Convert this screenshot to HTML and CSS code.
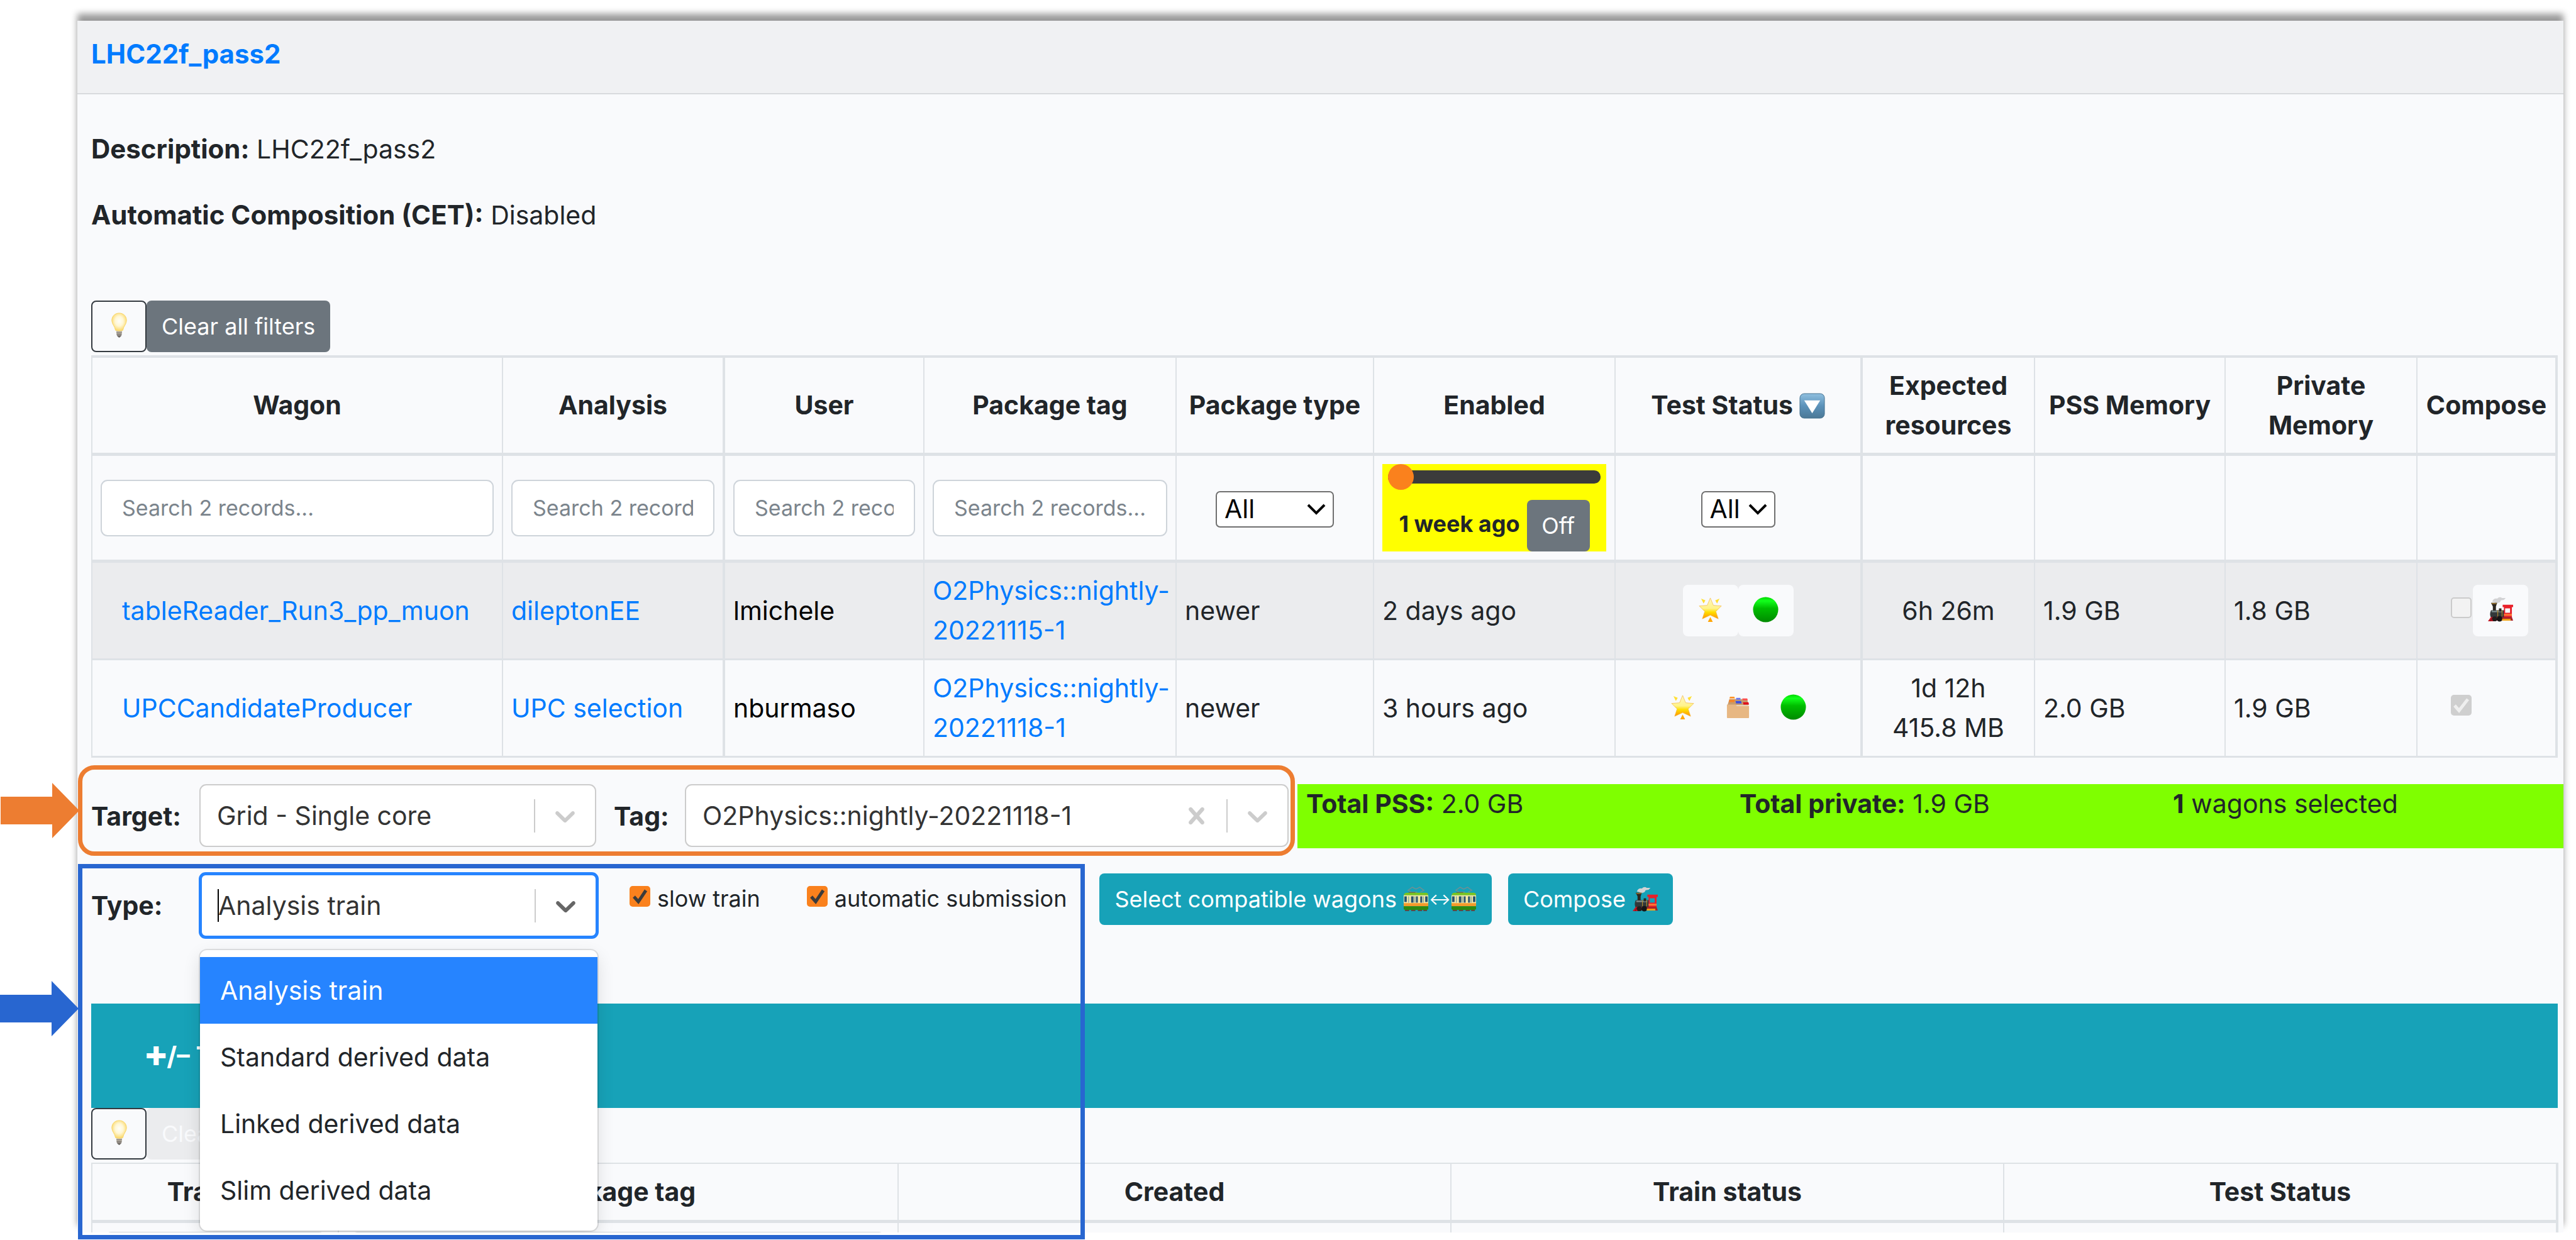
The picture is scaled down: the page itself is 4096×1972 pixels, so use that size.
FILE: index.html
```html
<!DOCTYPE html>
<html lang="en">
<head>
<meta charset="utf-8">
<title>LHC22f_pass2</title>
<link rel="stylesheet" href="styles.css">
</head>
<body>
<svg class="sprite" aria-hidden="true">
  <defs>
    <linearGradient id="g-star" x1="0" y1="0" x2="0" y2="1"><stop offset="0" stop-color="#fff6c0"/><stop offset=".5" stop-color="#fff38a"/><stop offset=".68" stop-color="#ffdf00"/><stop offset="1" stop-color="#ff8f00"/></linearGradient>
    <linearGradient id="g-ray" x1="0" y1="0" x2="0" y2="1"><stop offset="0" stop-color="#ffe53a"/><stop offset="1" stop-color="#ffa200"/></linearGradient>
    <linearGradient id="g-green" x1="0" y1="0" x2="0" y2="1"><stop offset="0" stop-color="#00d800"/><stop offset=".15" stop-color="#12ff1c"/><stop offset=".45" stop-color="#00bd00"/><stop offset="1" stop-color="#008a00"/></linearGradient>
    <radialGradient id="g-bulb" cx=".5" cy=".45" r=".55"><stop offset="0" stop-color="#fffef8"/><stop offset=".5" stop-color="#fff7d4"/><stop offset="1" stop-color="#fbd867"/></radialGradient>
    <linearGradient id="g-sort" x1="0" y1="0" x2="0" y2="1"><stop offset="0" stop-color="#8fbfdf"/><stop offset=".5" stop-color="#5b92ba"/><stop offset="1" stop-color="#4c7896"/></linearGradient>
    <linearGradient id="g-cap" x1="0" y1="0" x2="0" y2="1"><stop offset="0" stop-color="#e4dccb"/><stop offset=".6" stop-color="#9b948c"/><stop offset="1" stop-color="#4c4946"/></linearGradient>
  </defs>
  <symbol id="bulb" viewBox="0 0 42 42">
    <path d="M16 29h10l-1 8q-1 3-4 4-3-1-4-4z" fill="url(#g-cap)"/>
    <path d="M16.500 32h9M17 35h8" stroke="#77726d" stroke-width="1"/>
    <path d="M21 1C14 1 9 6 9 13c0 6 5 9 6 16q6 2 12 0c1-7 6-10 6-16C33 6 28 1 21 1z" fill="url(#g-bulb)" stroke="#f8d56a" stroke-width="1"/>
  </symbol>
  <symbol id="star" viewBox="0 0 42 42">
    <path d="M21 2l5 12 13 1-9 9 4 12-13-6-13 6 4-12L3 15l13-1z" fill="url(#g-star)" stroke="#f3b63c" stroke-width=".7"/>
    <path d="M6 3l7 3-3 5zM36 3l-7 3 3 5zM21 33l4 8h-8z" fill="url(#g-ray)"/>
  </symbol>
  <symbol id="green" viewBox="0 0 42 42"><circle cx="21" cy="21" r="20.500" fill="url(#g-green)"/></symbol>
  <symbol id="box" viewBox="0 0 42 42">
    <path d="M4 18l3-10h29l2 10z" fill="#c79b6c"/>
    <path d="M8 4h7l1 3H7z" fill="#ff9326"/><path d="M7 9h9l-1 4H6z" fill="#f5852a"/>
    <path d="M18 6h7v3h-7z" fill="#6b78f0"/><path d="M17 11h9l1 4h-9z" fill="#3c4fe0"/>
    <path d="M28 7h8l1 3h-8z" fill="#ff4e4e"/><path d="M29 13h9l1 4h-9z" fill="#e0101c"/>
    <path d="M3 17h14l2 2h20v19q0 1-1 1H4q-1 0-1-1z" fill="#e7b783"/>
  </symbol>
  <symbol id="loco" viewBox="0 0 42 42">
    <path d="M8 8q2-6 8-5 4-4 8-1l6 0-3 3-5 1q-1 4-5 4-2 3-5-1z" fill="#d3d3d5"/>
    <path d="M6 10h10l-2 6v8H9v-8z" fill="#2b2620"/><path d="M7 11h8" stroke="#8d6b2c" stroke-width="2"/>
    <path d="M6 22h22v12H6q-3-5 0-12z" fill="#33383a"/>
    <path d="M7 24h18" stroke="#7c8c8c" stroke-width="2.500"/>
    <path d="M19 19h4v5h-4z" fill="#2b2620"/>
    <path d="M17 22v10M24 22v10" stroke="#b28a2e" stroke-width="1.200"/>
    <path fill-rule="evenodd" d="M25 13h17v4h-2v19H27V17h-2zM29 19v7h8v-7z" fill="#e8202a"/>
    <path d="M27 28h13v3H27z" fill="#ff7b35"/>
    <path d="M1 40l5-7h6l1 7z" fill="#c01724"/><path d="M5 40l4-7" stroke="#6e0d15" stroke-width="1"/>
    <path d="M12 33h28l2 6H12z" fill="#a8232a"/>
    <circle cx="12" cy="36" r="4" fill="#221e1e"/><circle cx="20" cy="36" r="4.500" fill="#151515"/>
    <path d="M24 36h14v3H24z" fill="#f2a516"/>
  </symbol>
  <symbol id="tram" viewBox="0 0 42 42">
    <path d="M14 9L8 6l7-5 6 3 6-3 7 5-6 3M11 9h12" fill="none" stroke="#6b9195" stroke-width="1.500"/>
    <path d="M9 9h11v2H9z" fill="#555a4e"/>
    <path d="M1 14q1-4 5-4h31q4 0 4 4z" fill="#7bc51e"/>
    <path d="M1 14h40v16H1z" fill="#f7eaa6"/>
    <path d="M2 16h4v9H2zM13 16h4v10h-4zM21 16h3v10h-3zM28 16h3v10h-3zM36 16h4v9h-4z" fill="#28536f"/>
    <path d="M18 16h2v10h-2zM32 16h2v10h-2zM8 16h2v10H8z" fill="#8fb0a8"/>
    <path d="M1 27h40v5H1z" fill="#f59a2b"/><path d="M1 32h40v4q-1 2-3 2H4q-2 0-3-2z" fill="#2d8a10"/>
    <path d="M3 38h7v2H3zM13 38h7v2h-7zM24 38h7v2h-7zM33 38h6v2h-6z" fill="#5e4a44"/>
  </symbol>
  <symbol id="sort" viewBox="0 0 42 42">
    <rect x="1" y="1" width="40" height="40" rx="7" fill="url(#g-sort)" stroke="#45718f" stroke-width="1"/>
    <path d="M8 12h26L21 33z" fill="#fff"/>
  </symbol>
  <symbol id="chevron" viewBox="0 0 20 20"><path d="M4.516 7.548c.436-.446 1.043-.481 1.576 0L10 11.295l3.908-3.747c.533-.481 1.141-.446 1.574 0 .436.445.408 1.197 0 1.615-.406.418-4.695 4.502-4.695 4.502-.217.223-.502.335-.787.335s-.57-.112-.789-.335c0 0-4.287-4.084-4.695-4.502s-.436-1.170 0-1.615z"/></symbol>
  <symbol id="cross" viewBox="0 0 20 20"><path d="M14.348 14.849c-.469.469-1.229.469-1.697 0L10 11.819l-2.651 3.029c-.469.469-1.229.469-1.697 0-.469-.469-.469-1.229 0-1.697l2.758-3.150-2.759-3.152c-.469-.469-.469-1.228 0-1.697s1.228-.469 1.697 0L10 8.183l2.651-3.031c.469-.469 1.228-.469 1.697 0s.469 1.229 0 1.697l-2.758 3.152 2.758 3.150c.469.469.469 1.229 0 1.698z"/></symbol>
</svg>

<main class="panel">
  <header class="panel-head"><a href="#">LHC22f_pass2</a></header>
  <div class="panel-body">
    <section class="summary">
      <p><b>Description:</b> LHC22f_pass2</p>
      <p><b>Automatic Composition (CET):</b> Disabled</p>
    </section>

    <div class="toolbar">
      <button class="btn btn-icon btn-outline" aria-label="Hint"><svg class="emoji"><use href="#bulb"/></svg></button><button class="btn btn-secondary">Clear all filters</button>
    </div>

    <table class="grid wagons">
      <colgroup><col class="w1"><col class="w2"><col class="w3"><col class="w4"><col class="w5"><col class="w6"><col class="w7"><col class="w8"><col class="w9"><col class="w10"><col class="w11"></colgroup>
      <thead>
        <tr class="heads">
          <th>Wagon</th><th>Analysis</th><th class="thick">User</th><th>Package tag</th><th>Package type</th><th>Enabled</th>
          <th>Test Status <svg class="emoji sort"><use href="#sort"/></svg></th>
          <th class="thick">Expected resources</th><th>PSS Memory</th><th>Private Memory</th><th>Compose</th>
        </tr>
        <tr class="filters">
          <td><input class="search" type="text" aria-label="Filter wagon" placeholder="Search 2 records..."></td>
          <td><input class="search" type="text" aria-label="Filter analysis" placeholder="Search 2 records..."></td>
          <td class="thick"><input class="search" type="text" aria-label="Filter user" placeholder="Search 2 records..."></td>
          <td><input class="search" type="text" aria-label="Filter package tag" placeholder="Search 2 records..."></td>
          <td class="center"><select class="mini mini-wide" aria-label="Filter package type"><option>All</option></select></td>
          <td>
            <div class="age">
              <input type="range" min="0" max="100" value="0" aria-label="Enabled since">
              <div class="age-row"><b>1 week ago</b><button class="btn btn-secondary btn-off">Off</button></div>
            </div>
          </td>
          <td class="center"><select class="mini" aria-label="Filter test status"><option>All</option></select></td>
          <td class="thick"></td><td></td><td></td><td></td>
        </tr>
      </thead>
      <tbody>
        <tr class="odd">
          <td class="name"><a href="#">tableReader_Run3_pp_muon</a></td>
          <td><a href="#">dileptonEE</a></td>
          <td class="thick user">lmichele</td>
          <td><a href="#">O2Physics::nightly-20221115-1</a></td>
          <td>newer</td><td>2 days ago</td>
          <td><div class="icons"><button class="btn btn-icon btn-light" aria-label="New"><svg class="emoji"><use href="#star"/></svg></button><button class="btn btn-icon btn-light" aria-label="Test passed"><svg class="emoji"><use href="#green"/></svg></button></div></td>
          <td class="thick center">6h 26m</td><td>1.9 GB</td><td>1.8 GB</td>
          <td class="compose"><div class="icons"><input class="tick" type="checkbox" disabled aria-label="Compose tableReader_Run3_pp_muon"><button class="btn btn-icon btn-light" aria-label="Train"><svg class="emoji"><use href="#loco"/></svg></button></div></td>
        </tr>
        <tr>
          <td class="name"><a href="#">UPCCandidateProducer</a></td>
          <td><a href="#">UPC selection</a></td>
          <td class="thick user">nburmaso</td>
          <td><a href="#">O2Physics::nightly-20221118-1</a></td>
          <td>newer</td><td>3 hours ago</td>
          <td><div class="icons"><button class="btn btn-icon btn-light" aria-label="New"><svg class="emoji"><use href="#star"/></svg></button><button class="btn btn-icon btn-light" aria-label="Derived data"><svg class="emoji"><use href="#box"/></svg></button><button class="btn btn-icon btn-light" aria-label="Test passed"><svg class="emoji"><use href="#green"/></svg></button></div></td>
          <td class="thick center">1d 12h<br>415.8 MB</td><td>2.0 GB</td><td>1.9 GB</td>
          <td class="compose"><div class="icons"><input class="tick" type="checkbox" checked disabled aria-label="Compose UPCCandidateProducer"><span class="btn btn-icon"></span></div></td>
        </tr>
      </tbody>
    </table>

    <div class="row target-row">
      <label class="lead" for="target">Target:</label>
      <div class="picker">
        <select id="target"><option>Grid - Single core</option></select>
        <span class="marks"><i></i><svg><use href="#chevron"/></svg></span>
      </div>
      <label class="lead lead-tag" for="tag">Tag:</label>
      <div class="picker picker-tag">
        <select id="tag"><option>O2Physics::nightly-20221118-1</option></select>
        <span class="marks"><svg><use href="#cross"/></svg><i></i><svg><use href="#chevron"/></svg></span>
      </div>
      <div class="totals">
        <span><b>Total PSS:</b> 2.0 GB</span><span><b>Total private:</b> 1.9 GB</span><span><b>1</b> wagons selected</span>
      </div>
    </div>

    <div class="row type-row">
      <label class="lead" for="type">Type:</label>
      <div class="picker picker-open">
        <input id="type" type="text" role="combobox" aria-expanded="true" aria-controls="type-menu" value="Analysis train">
        <span class="caret"></span>
        <span class="marks"><i></i><svg><use href="#chevron"/></svg></span>
        <ul class="menu" id="type-menu" role="listbox">
          <li role="option" aria-selected="true">Analysis train</li>
          <li role="option">Standard derived data</li>
          <li role="option">Linked derived data</li>
          <li role="option">Slim derived data</li>
        </ul>
      </div>
      <div class="checks">
        <label><input class="tick" type="checkbox" checked> slow train</label>
        <label><input class="tick" type="checkbox" checked> automatic submission</label>
      </div>
      <div class="actions">
        <button class="btn btn-info">Select compatible wagons <svg class="emoji"><use href="#tram"/></svg><span class="swap">↔</span><svg class="emoji"><use href="#tram"/></svg></button>
        <button class="btn btn-info">Compose <svg class="emoji"><use href="#loco"/></svg></button>
      </div>
    </div>

    <h2 class="bar"><span class="plus">✚</span>/– Trains</h2>

    <div class="toolbar">
      <button class="btn btn-icon btn-outline" aria-label="Hint"><svg class="emoji"><use href="#bulb"/></svg></button><button class="btn btn-disabled" disabled>Clear all filters</button>
    </div>

    <table class="grid trains">
      <colgroup><col class="t1"><col class="t2"><col class="t3"><col class="t3"><col class="t3"></colgroup>
      <thead>
        <tr class="heads"><th>Train ID</th><th>Package tag</th><th>Created</th><th>Train status</th><th>Test Status</th></tr>
        <tr class="filters">
          <td><input class="search" type="text" aria-label="Filter train"></td>
          <td><input class="search" type="text" aria-label="Filter train package tag"></td>
          <td></td><td></td><td></td>
        </tr>
      </thead>
    </table>
  </div>
</main>

<div class="callout callout-target"></div>
<div class="callout callout-type"></div>
<svg class="arrow arrow-target" viewBox="0 0 126 88"><path d="M1 22h82V0l43 44-43 44V66H1z"/></svg>
<svg class="arrow arrow-type" viewBox="0 0 126 88"><path d="M0 22h82V0l43 44-43 44V66H0z"/></svg>
</body>
</html>
```
FILE: styles.css
```css
:root {
  --text: #212529;
  --link: #007bff;
  --surface: #f9fafc;
  --line: #dee2e6;
  --info: #17a2b8;
  --secondary: #6c757d;
  --orange: #ed7d31;
  --blue: #2866d0;
  --fs: 41px;
  --fs-title: 42px;
  --fs-small: 36px;
}
* { box-sizing: border-box; }
body {
  margin: 0;
  height: 100vh;
  position: relative;
  display: flex;
  flex-direction: column;
  overflow: hidden;
  background: #fff;
  color: var(--text);
  font: 400 var(--fs)/63px Inter, "Liberation Sans", sans-serif;
}
a { color: var(--link); text-decoration: none; }
b, th { font-weight: 700; }
p, h2, ul { margin: 0; padding: 0; }
button, input, select { font: inherit; color: inherit; margin: 0; }
.sprite { position: absolute; width: 0; height: 0; }

.panel {
  flex: 1;
  min-height: 0;
  margin: 33px 20px 12px 123px;
  overflow: hidden;
  background: var(--surface);
  box-shadow: 0 -11px 10px rgba(0, 0, 0, .4);
}
.panel-head {
  padding: 21px 22px 31px;
  background: #f0f1f3;
  border-bottom: 2px solid #d8dadd;
  font-size: var(--fs-title);
  font-weight: 700;
}
.panel-body { padding: 56px 9px 0 22px; }
.summary { display: grid; gap: 42px; margin-bottom: 104px; }
.summary b { font-size: var(--fs-title); line-height: 1; }

.toolbar { display: flex; margin-bottom: 5px; }
.btn {
  display: inline-flex;
  align-items: center;
  justify-content: center;
  height: 82px;
  padding: 0 24px;
  border: 0;
  border-radius: 8px;
  font-size: var(--fs-small);
  line-height: 54px;
  white-space: pre;
}
.btn-icon { width: 88px; padding: 0 0 4px; }
.btn-outline { background: var(--surface); border: 2px solid #343a40; }
.btn-secondary { background: var(--secondary); color: #fff; }
.btn-disabled { background: #ebecee; color: var(--surface); }
.btn-light { background: var(--surface); }
.btn-info { background: var(--info); color: #fff; }
.emoji { width: 41px; height: 41px; flex: none; }
.emoji.sort { vertical-align: -7px; }
.swap { font-size: 26px; }

.grid {
  width: 100%;
  table-layout: fixed;
  border-collapse: separate;
  border-spacing: 0;
  border-right: 4px solid var(--line);
}
.grid th, .grid td {
  padding: 0 13px;
  border-left: 2px solid var(--line);
  border-bottom: 3px solid var(--line);
  vertical-align: middle;
}
.grid .heads th, .grid .filters td { border-bottom-width: 5px; }
.grid .thick { border-left-width: 4px; }
.grid .heads th { padding: 0 4px; }
.grid .center { text-align: center; }
.grid .compose { padding-right: 4px; }
.wagons { border-top: 4px solid var(--line); }
.wagons .heads { height: 156px; }
.wagons .filters { height: 170px; }
.wagons tbody tr { height: 155px; }
.wagons .odd { background: #ebecee; }
.wagons .name { padding-left: 47px; }
.wagons .user { color: #000; }
.w1 { width: 653px; } .w2 { width: 351px; } .w3 { width: 319px; } .w4 { width: 401px; }
.w5 { width: 314px; } .w6 { width: 384px; } .w7 { width: 391px; } .w8 { width: 276px; }
.w9 { width: 303px; } .w10 { width: 305px; } .w11 { width: 221px; }
.trains { border-top: 2px solid var(--line); }
.trains .heads { height: 94px; }
.trains .filters td { padding: 14px 19px; }
.t1 { width: 392px; } .t2 { width: 890px; } .t3 { width: 879px; }

.search {
  display: block;
  width: 100%;
  height: 90px;
  padding: 0 32px;
  border: 2px solid #ced4da;
  border-radius: 11px;
  background: #fff;
  font-size: 34px;
}
.search::placeholder { color: #7b848c; opacity: 1; }
.mini {
  appearance: none;
  width: 118px;
  height: 58px;
  padding: 0 12px 2px;
  border: 2px solid #6f6f6f;
  border-radius: 7px;
  background: #fff url("data:image/svg+xml,%3Csvg xmlns='http://www.w3.org/2000/svg' width='32' height='20'%3E%3Cpath d='M3 3l13 13L29 3' fill='none' stroke='%23000' stroke-width='4'/%3E%3C/svg%3E") no-repeat right 10px center;
  color: #000;
  line-height: 52px;
  vertical-align: middle;
}
.mini-wide { width: 188px; }

.age { height: 139px; background: #ff0; display: flex; flex-direction: column; justify-content: space-between; }
.age input {
  appearance: none;
  display: block;
  height: 41px;
  margin: 0 9px;
  background: none;
}
.age input::-webkit-slider-runnable-track { height: 21px; border-radius: 10px; background: #3b3b3b; }
.age input::-webkit-slider-thumb { appearance: none; width: 41px; height: 41px; margin-top: -10px; border-radius: 50%; background: #fa811d; }
.age-row { display: flex; justify-content: center; gap: 11px; font-size: var(--fs-small); line-height: 76px; white-space: nowrap; }
.btn-off { width: 100px; }

.icons { display: flex; align-items: center; justify-content: center; }
.tick {
  appearance: none;
  flex: none;
  width: 33px;
  height: 33px;
  border-radius: 5px;
  background: #fa811d url("data:image/svg+xml,%3Csvg xmlns='http://www.w3.org/2000/svg' viewBox='0 0 33 33'%3E%3Cpath d='M7 17l7 8L26 7' fill='none' stroke='%233b3b3b' stroke-width='5'/%3E%3C/svg%3E");
}
.icons .tick { margin: 0 2px 10px 0; }
.tick:disabled { border: 2px solid #cbcbcb; background: #f2f2f2; }
.tick:disabled:checked { border: 0; background: #cfcfcf url("data:image/svg+xml,%3Csvg xmlns='http://www.w3.org/2000/svg' viewBox='0 0 33 33'%3E%3Cpath d='M6 17l7 8L27 7' fill='none' stroke='%23efefef' stroke-width='5'/%3E%3C/svg%3E"); }

.row { display: flex; }
.target-row { margin: 42px -9px 38px 0; }
.lead { flex: 0 0 172px; font-weight: 700; line-height: 102px; }
.lead-tag { flex-basis: 141px; padding-left: 28px; }
.picker { position: relative; flex: 0 0 631px; height: 100px; }
.picker-tag { flex-basis: 960px; }
.picker select, .picker input {
  appearance: none;
  display: block;
  width: 100%;
  height: 100%;
  padding: 0 26px;
  border: 2px solid #ccc;
  border-radius: 11px;
  background: #fff;
  color: #333;
}
.marks { position: absolute; inset: 0 2px 0 auto; display: flex; align-items: center; pointer-events: none; }
.marks svg { width: 53px; height: 53px; margin: 0 21px; fill: #ccc; }
.marks i { width: 2px; height: 53px; background: #ccc; }
.totals {
  flex: 1;
  display: grid;
  grid-template-columns: 1fr 1fr 1fr;
  column-gap: 68px;
  margin-left: 14px;
  padding-left: 14px;
  background: #7fff00;
  white-space: nowrap;
}

.type-row { margin-bottom: 103px; }
.type-row .lead { line-height: 106px; flex-basis: 171px; }
.picker-open { height: 106px; flex-basis: 636px; }
.picker-open input { border: 5px solid #2684ff; outline: 0; }
.picker-open .marks { right: 5px; }
.picker-open .marks svg { fill: #666; }
.caret { position: absolute; left: 30px; top: 27px; width: 2px; height: 52px; background: #000; }
.menu {
  position: absolute;
  z-index: 2;
  top: calc(100% + 18px);
  left: 2px;
  right: 2px;
  padding: 11px 0;
  background: #fff;
  border-radius: 11px;
  box-shadow: 0 0 0 2px rgba(0, 0, 0, .1), 0 10px 28px rgba(0, 0, 0, .12);
  list-style: none;
}
.menu li { padding: 21px 32px; line-height: 64px; }
.menu [aria-selected] { background: #2684ff; color: #fff; }
.checks { display: flex; gap: 74px; margin-left: 49px; font-size: var(--fs-small); white-space: nowrap; }
.checks label { display: flex; align-items: center; gap: 11px; height: 84px; }
.checks .tick { margin-bottom: 8px; }
.actions { display: flex; gap: 26px; margin-left: 52px; padding-top: 2px; }

.bar { padding: 0 86px; height: 166px; background: var(--info); color: #fff; font-size: var(--fs); font-weight: 700; line-height: 166px; }
.plus { font-family: "DejaVu Sans", sans-serif; }

.callout { position: absolute; z-index: 3; left: 124px; pointer-events: none; }
.callout-target { top: 1217px; width: 1935px; height: 144px; border: 7px solid var(--orange); border-radius: 26px; }
.callout-type { top: 1374px; bottom: 1px; width: 1601px; border: 7px solid var(--blue); }
.arrow { position: absolute; z-index: 3; left: 0; width: 126px; height: 88px; }
.arrow-target { top: 1245px; fill: var(--orange); }
.arrow-type { top: 1560px; fill: var(--blue); }
```
